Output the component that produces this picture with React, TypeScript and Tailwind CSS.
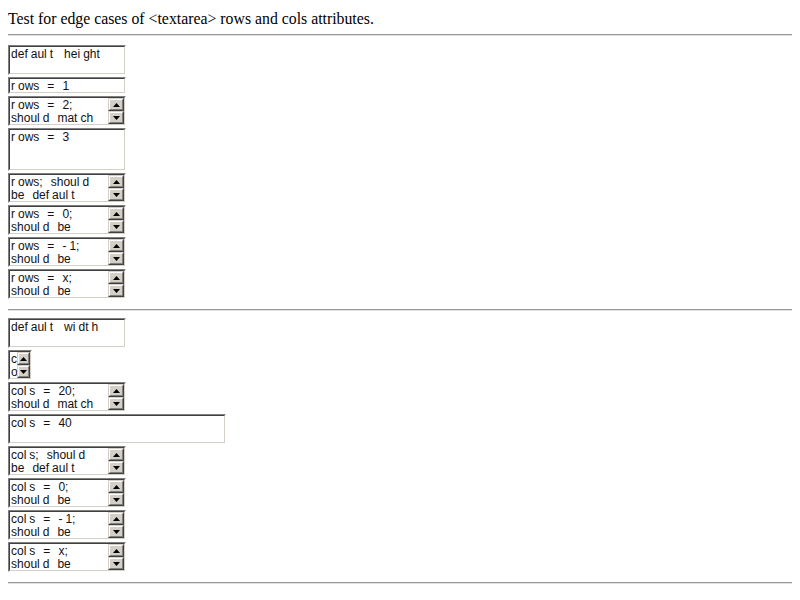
import React from "react";

// chars whose cell is drawn wider than the glyph in the reference
const NARROW = new Set(["f", "i", "l", "r", "t", "-"]);

function Line({ text }: { text: string }) {
  return (
    <div className="whitespace-pre h-[13px] leading-[13px]">
      {text.split("").map((c, i) =>
        c === " " ? (
          <span key={i} className="inline-block w-[8px]"> </span>
        ) : (
          <span key={i} className={NARROW.has(c) ? "mr-[3px]" : ""}>
            {c}
          </span>
        )
      )}
    </div>
  );
}

function Arrow({ up }: { up?: boolean }) {
  return (
    <div className="flex-1 bg-[#d4d0c8] border border-t-[#d4d0c8] border-l-[#d4d0c8] border-b-[#404040] border-r-[#404040]">
      <div className="h-full flex items-center justify-center border border-t-white border-l-white border-b-[#808080] border-r-[#808080]">
        <svg width="7" height="4" viewBox="0 0 7 4">
          {up ? <path d="M3.5 0 L7 4 L0 4 Z" fill="#000" /> : <path d="M0 0 L7 0 L3.5 4 Z" fill="#000" />}
        </svg>
      </div>
    </div>
  );
}

function Area({
  lines,
  w,
  h,
  scroll,
  bar = "w-[16px]",
}: {
  lines: string[];
  w: string;
  h: string;
  scroll?: boolean;
  bar?: string;
}) {
  return (
    <div
      className={`${w} ${h} shrink-0 border border-t-[#808080] border-l-[#808080] border-b-white border-r-white`}
    >
      <div className="h-full flex bg-white border border-t-[#404040] border-l-[#404040] border-b-[#d4d0c8] border-r-[#d4d0c8]">
        <div className="flex-1 min-w-0 overflow-hidden pl-[1px] pt-[1px] text-[12px] text-[#111] font-['Liberation_Sans',Arial,sans-serif]">
          {lines.map((l, i) => (
            <Line key={i} text={l} />
          ))}
        </div>
        {scroll && (
          <div className={`${bar} shrink-0 flex flex-col`}>
            <Arrow up />
            <Arrow />
          </div>
        )}
      </div>
    </div>
  );
}

function Rule({ className = "" }: { className?: string }) {
  return <div className={`h-[2px] border-t border-[#999999] border-b border-b-[#e0e0e0] ${className}`} />;
}

export default function App() {
  return (
    <div className="min-h-[600px] bg-white p-[8px] font-['Liberation_Serif','Times_New_Roman',serif] text-black">
      <p className="text-[15.8px] leading-[18px] mt-[2px]">
        Test for edge cases of &lt;textarea&gt; rows and cols attributes.
      </p>
      <Rule className="mt-[6px]" />

      <div className="flex flex-col gap-[2px] mt-[9px]">
        <Area lines={["default height"]} w="w-[118px]" h="h-[30px]" />
        <Area lines={["rows = 1"]} w="w-[118px]" h="h-[17px]" />
        <Area lines={["rows = 2;", "should match"]} w="w-[118px]" h="h-[30px]" scroll />
        <Area lines={["rows = 3"]} w="w-[118px]" h="h-[43px]" />
        <Area lines={["rows; should", "be default"]} w="w-[118px]" h="h-[30px]" scroll />
        <Area lines={["rows = 0;", "should be"]} w="w-[118px]" h="h-[30px]" scroll />
        <Area lines={["rows = -1;", "should be"]} w="w-[118px]" h="h-[30px]" scroll />
        <Area lines={["rows = x;", "should be"]} w="w-[118px]" h="h-[30px]" scroll />
      </div>

      <Rule className="mt-[10px]" />

      <div className="flex flex-col gap-[2px] mt-[7px]">
        <Area lines={["default width"]} w="w-[118px]" h="h-[30px]" />
        <Area lines={["c", "o"]} w="w-[24px]" h="h-[30px]" scroll bar="w-[13px]" />
        <Area lines={["cols = 20;", "should match"]} w="w-[118px]" h="h-[30px]" scroll />
        <Area lines={["cols = 40"]} w="w-[218px]" h="h-[30px]" />
        <Area lines={["cols; should", "be default"]} w="w-[118px]" h="h-[30px]" scroll />
        <Area lines={["cols = 0;", "should be"]} w="w-[118px]" h="h-[30px]" scroll />
        <Area lines={["cols = -1;", "should be"]} w="w-[118px]" h="h-[30px]" scroll />
        <Area lines={["cols = x;", "should be"]} w="w-[118px]" h="h-[30px]" scroll />
      </div>

      <Rule className="mt-[10px]" />
    </div>
  );
}
